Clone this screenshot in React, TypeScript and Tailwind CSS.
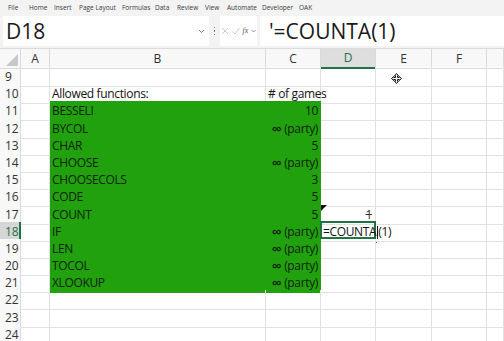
import React from 'react';

const menu: [string, string][] = [
  ['File', 'w-[21px]'],
  ['Home', 'w-[25px]'],
  ['Insert', 'w-[25px]'],
  ['Page Layout', 'w-[43px]'],
  ['Formulas', 'w-[33px]'],
  ['Data', 'w-[22px]'],
  ['Review', 'w-[28px]'],
  ['View', 'w-[22px]'],
  ['Automate', 'w-[35px]'],
  ['Developer', 'w-[37px]'],
  ['OAK', 'w-[20px]'],
];

const cols = ['A', 'B', 'C', 'D', 'E', 'F', ''];

const funcs: [string, string][] = [
  ['BESSELI', '10'],
  ['BYCOL', '∞'],
  ['CHAR', '5'],
  ['CHOOSE', '∞'],
  ['CHOOSECOLS', '3'],
  ['CODE', '5'],
  ['COUNT', '5'],
  ['IF', '∞'],
  ['LEN', '∞'],
  ['TOCOL', '∞'],
  ['XLOOKUP', '∞'],
];

const gridCols = 'grid grid-cols-[21px_29px_216px_55px_55px_56px_55px_1fr]';

function Row({ n }: { n: number }) {
  const idx = n - 11;
  const green = idx >= 0 && idx < funcs.length;
  const active = n === 18;
  let b: React.ReactNode = null;
  let c: React.ReactNode = null;
  if (n === 10) {
    b = 'Allowed functions:';
    c = '# of games';
  }
  if (green) {
    b = funcs[idx][0];
    c =
      funcs[idx][1] === '∞' ? (
        <>
          <span className="text-[14px] leading-none font-semibold">∞</span>
          <span>&nbsp;(party)</span>
        </>
      ) : (
        funcs[idx][1]
      );
  }
  const cell = 'h-full border-r border-b whitespace-nowrap px-[2px] pt-[1px] flex items-center tracking-[-0.35px]';
  const plain = 'border-[#e2e2e2] text-[#111]';
  const fill = 'bg-[#22a10e] border-[#22a10e] text-[#0e1f08]';
  return (
    <div className={`${gridCols} h-[17.2px]`}>
      <div
        className={`h-full flex items-center pl-[5px] pt-[1px] border-b border-r ${
          active ? 'bg-[#d6d6d6] text-[#217346] border-r-2 border-r-[#217346] border-b-[#c6c6c6]' : 'bg-[#f8f8f8] text-[#333] border-[#dadada]'
        }`}
      >
        {n}
      </div>
      <div className={`${cell} ${plain}`}></div>
      <div className={`${cell} ${green ? fill : plain}`}>{b}</div>
      <div className={`${cell} ${n === 10 ? 'justify-start' : 'justify-end'} ${green ? fill : plain}`}>{c}</div>
      <div className={`${cell} ${plain} relative ${n === 17 ? 'justify-end' : ''}`}>
        {n === 17 && (
          <>
            <span className="absolute left-0 top-0 w-0 h-0 border-t-[6px] border-t-[#111] border-r-[6px] border-r-transparent" />
            <span className="line-through text-[#333] pr-[1px]">1</span>
          </>
        )}
        {active && (
          <>
            <span className="absolute -left-[1px] -top-[1px] w-[56px] h-[18.2px] border-2 border-[#217346]" />
            <span className="absolute right-[-3px] bottom-[-3px] w-[4px] h-[4px] bg-[#217346] border border-white" />
            <span className="relative text-[#111]">
              =COUNTA<span className="inline-block w-[1px] h-[13px] bg-[#111] align-middle mx-[0.5px]" />(1)
            </span>
          </>
        )}
      </div>
      <div className={`${cell} ${plain} relative`}>
        {n === 9 && (
          <svg className="absolute left-[15px] top-[6px]" width="11" height="11" viewBox="0 0 11 11">
            <path
              d="M5.5 0.5 L7.5 2.8 H6.5 V4.5 H8.2 V3.5 L10.5 5.5 L8.2 7.5 V6.5 H6.5 V8.2 H7.5 L5.5 10.5 L3.5 8.2 H4.5 V6.5 H2.8 V7.5 L0.5 5.5 L2.8 3.5 V4.5 H4.5 V2.8 H3.5 Z"
              fill="#fff"
              stroke="#111"
              strokeWidth="1"
            />
          </svg>
        )}
      </div>
      <div className={`${cell} ${plain}`}></div>
      <div className={`${cell} ${plain}`}></div>
    </div>
  );
}

export default function App() {
  const rows = Array.from({ length: 16 }, (_, i) => i + 9);
  return (
    <div
      className="w-[504px] h-[341px] overflow-hidden bg-white text-[12px]"
      style={{ fontFamily: '"Open Sans", "Noto Sans", sans-serif' }}
    >
      <div className="h-[15px] bg-[#f3f3f3] flex items-center pl-[8px] text-[6.5px] text-[#3a3a3a]">
        {menu.map(([m, w]) => (
          <span key={m} className={`${w} shrink-0`}>
            {m}
          </span>
        ))}
      </div>
      <div className="h-[34px] bg-[#f3f3f3] flex items-center pl-[3px] pb-[1px] border-b border-[#dcdcdc]">
        <div className="w-[206px] h-[30px] bg-white flex items-center justify-between pl-[3px] pr-[4px]">
          <span className="text-[21px] text-[#1a1a1a] leading-none">D18</span>
          <svg width="7" height="5" viewBox="0 0 7 5">
            <path d="M1 1 L3.5 3.5 L6 1" fill="none" stroke="#777" strokeWidth="1" />
          </svg>
        </div>
        <div className="w-[11px] flex flex-col items-center gap-[2px]">
          <span className="w-[1.5px] h-[1.5px] bg-[#777]" />
          <span className="w-[1.5px] h-[1.5px] bg-[#777]" />
          <span className="w-[1.5px] h-[1.5px] bg-[#777]" />
        </div>
        <div className="w-[37px] h-[30px] bg-white flex items-center justify-center gap-[3px]">
          <svg width="8" height="8" viewBox="0 0 8 8">
            <path d="M1 1 L7 7 M7 1 L1 7" stroke="#c4c4c4" strokeWidth="0.9" />
          </svg>
          <svg width="8" height="8" viewBox="0 0 8 8">
            <path d="M0.5 4.5 L3 7 L7.5 1" fill="none" stroke="#c4c4c4" strokeWidth="0.9" />
          </svg>
          <span className="italic text-[8px] text-[#555]" style={{ fontFamily: '"Liberation Serif", serif' }}>
            fx
          </span>
          <svg width="5" height="4" viewBox="0 0 5 4">
            <path d="M0.5 1 L2.5 3 L4.5 1" fill="none" stroke="#777" strokeWidth="0.8" />
          </svg>
        </div>
        <div className="flex-1 h-[30px] bg-white ml-[3px] flex items-center pl-[9px]">
          <span className="text-[21px] text-[#1a1a1a] leading-none">'=COUNTA(1)</span>
        </div>
      </div>
      <div className={`${gridCols} h-[18px] bg-[#f8f8f8] text-[#333]`}>
        <div className="h-full border-r border-b border-[#dadada] relative">
          <span className="absolute right-[2px] bottom-[2px] w-0 h-0 border-b-[12px] border-b-[#c8c8c8] border-l-[12px] border-l-transparent" />
        </div>
        {cols.map((c, i) => (
          <div
            key={i}
            className={`h-full flex items-center justify-center border-r border-[#dadada] ${
              c === 'D' ? 'bg-[#dedede] text-[#217346] border-b-2 border-b-[#217346]' : 'border-b'
            }`}
          >
            {c}
          </div>
        ))}
      </div>
      {rows.map((n) => (
        <Row key={n} n={n} />
      ))}
    </div>
  );
}
